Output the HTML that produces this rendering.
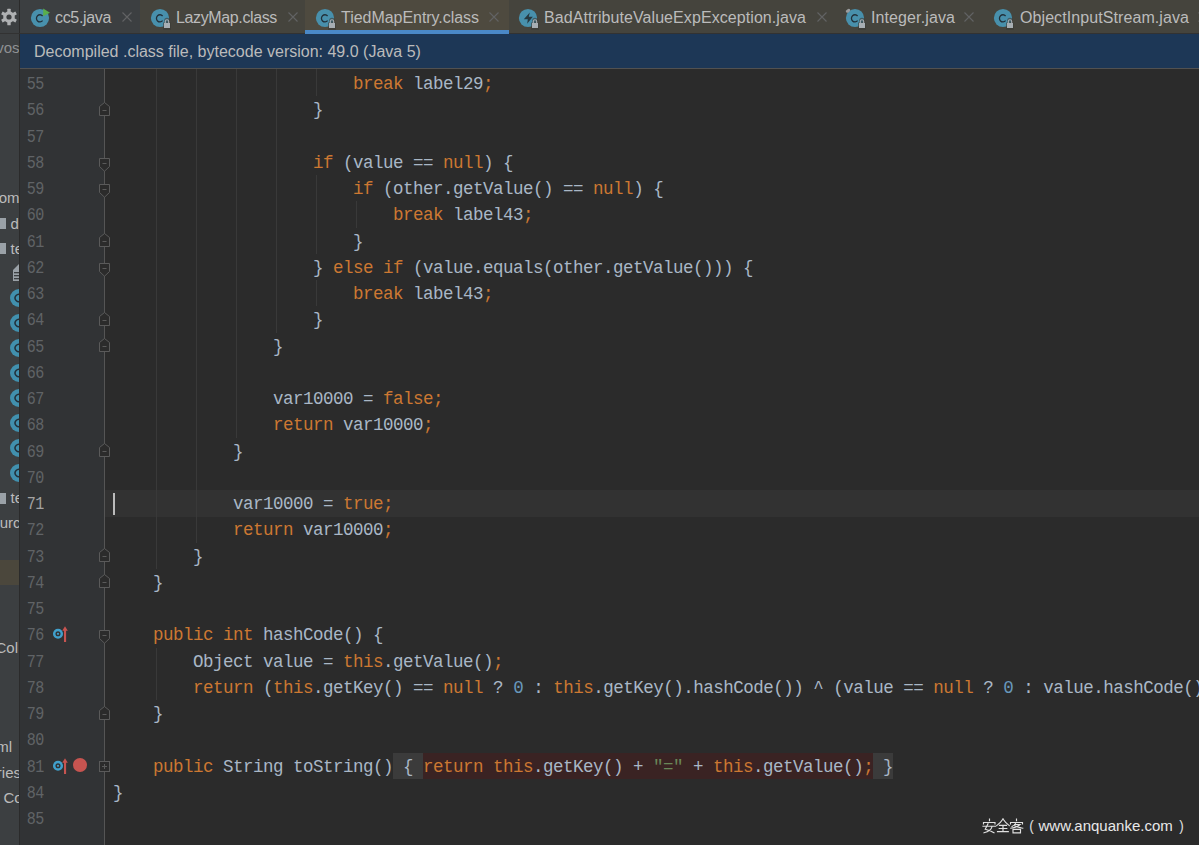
<!DOCTYPE html>
<html><head><meta charset="utf-8">
<style>
*{margin:0;padding:0;box-sizing:border-box}
html,body{width:1199px;height:845px;overflow:hidden;background:#2B2B2B}
body{position:relative;font-family:"Liberation Sans",sans-serif}
.a{position:absolute}
.code{position:absolute;left:113px;font-family:"Liberation Mono",monospace;font-size:17.5px;letter-spacing:-0.5px;white-space:pre;padding-top:1px;height:26.25px;line-height:26.25px;color:#A9B7C6}
.ln{position:absolute;left:13.5px;width:30px;text-align:right;transform:scaleX(0.86);transform-origin:29px 0;font-family:"Liberation Mono",monospace;font-size:17.5px;letter-spacing:-0.5px;padding-top:1px;height:26.25px;line-height:26.25px;color:#606366}
.g{position:absolute;width:1px;background:#393939}
.tab{position:absolute;top:0;height:33px}
.tt{position:absolute;top:8px;font-size:16px;color:#BBBBBB;white-space:nowrap;line-height:20px}
</style></head><body>

<div class="a" style="left:0;top:0;width:19px;height:845px;background:#3C3F41"></div>
<div class="a" style="left:19px;top:0;width:1px;height:845px;background:#2B2B2B"></div>
<div class="a" style="left:20px;top:0;width:1179px;height:33px;background:#45443D"></div>
<div class="a" style="left:20px;top:0;width:120px;height:33px;background:#3C3F41"></div>
<div class="a" style="left:305px;top:0;width:204px;height:33px;background:#4E4A3F"></div>
<div class="a" style="left:0;top:33px;width:1199px;height:1px;background:#323232"></div>
<div class="a" style="left:305px;top:30px;width:204px;height:4px;background:#4A88C7"></div>
<div class="a" style="left:20px;top:34px;width:1179px;height:34px;background:#1D3756"></div>
<div class="a" style="left:20px;top:68px;width:1179px;height:1px;background:#515151"></div>
<div class="a" style="left:34px;top:42px;font-size:16px;line-height:20px;color:#BBBBBB;white-space:nowrap">Decompiled .class file, bytecode version: 49.0 (Java 5)</div>
<div class="a" style="left:20px;top:69px;width:84px;height:776px;background:#313335"></div>
<div class="a" style="left:104px;top:69px;width:1px;height:776px;background:#555555"></div>
<div class="a" style="left:105px;top:490.00px;width:1094px;height:27px;background:#323232"></div>
<div class="a" style="left:113px;top:492.50px;width:2px;height:22px;background:#BBBBBB"></div>
<div class="g" style="left:156px;top:69.00px;height:499.75px"></div>
<div class="g" style="left:196px;top:69.00px;height:473.50px"></div>
<div class="g" style="left:236px;top:69.00px;height:368.50px"></div>
<div class="g" style="left:276px;top:69.00px;height:263.50px"></div>
<div class="g" style="left:316px;top:69.00px;height:27.25px"></div>
<div class="g" style="left:316px;top:175.00px;height:78.75px"></div>
<div class="g" style="left:316px;top:280.00px;height:26.25px"></div>
<div class="g" style="left:356px;top:201.25px;height:26.25px"></div>
<div class="g" style="left:156px;top:647.50px;height:52.50px"></div>
<div class="a" style="left:393px;top:752.50px;width:30px;height:26.25px;background:#3B3B3B"></div>
<div class="a" style="left:423px;top:752.50px;width:450px;height:26.25px;background:#3A2323"></div>
<div class="a" style="left:873px;top:752.50px;width:20px;height:26.25px;background:#3B3B3B"></div>
<div class="ln" style="top:70.00px;color:#606366">55</div>
<div class="code" style="top:70.00px">                        <span style="color:#CC7832">break</span> label29<span style="color:#CC7832">;</span></div>
<div class="ln" style="top:96.25px;color:#606366">56</div>
<div class="code" style="top:96.25px">                    }</div>
<div class="ln" style="top:122.50px;color:#606366">57</div>
<div class="ln" style="top:148.75px;color:#606366">58</div>
<div class="code" style="top:148.75px">                    <span style="color:#CC7832">if</span> (value == <span style="color:#CC7832">null</span>) {</div>
<div class="ln" style="top:175.00px;color:#606366">59</div>
<div class="code" style="top:175.00px">                        <span style="color:#CC7832">if</span> (other.getValue() == <span style="color:#CC7832">null</span>) {</div>
<div class="ln" style="top:201.25px;color:#606366">60</div>
<div class="code" style="top:201.25px">                            <span style="color:#CC7832">break</span> label43<span style="color:#CC7832">;</span></div>
<div class="ln" style="top:227.50px;color:#606366">61</div>
<div class="code" style="top:227.50px">                        }</div>
<div class="ln" style="top:253.75px;color:#606366">62</div>
<div class="code" style="top:253.75px">                    } <span style="color:#CC7832">else if</span> (value.equals(other.getValue())) {</div>
<div class="ln" style="top:280.00px;color:#606366">63</div>
<div class="code" style="top:280.00px">                        <span style="color:#CC7832">break</span> label43<span style="color:#CC7832">;</span></div>
<div class="ln" style="top:306.25px;color:#606366">64</div>
<div class="code" style="top:306.25px">                    }</div>
<div class="ln" style="top:332.50px;color:#606366">65</div>
<div class="code" style="top:332.50px">                }</div>
<div class="ln" style="top:358.75px;color:#606366">66</div>
<div class="ln" style="top:385.00px;color:#606366">67</div>
<div class="code" style="top:385.00px">                var10000 = <span style="color:#CC7832">false;</span></div>
<div class="ln" style="top:411.25px;color:#606366">68</div>
<div class="code" style="top:411.25px">                <span style="color:#CC7832">return</span> var10000<span style="color:#CC7832">;</span></div>
<div class="ln" style="top:437.50px;color:#606366">69</div>
<div class="code" style="top:437.50px">            }</div>
<div class="ln" style="top:463.75px;color:#606366">70</div>
<div class="ln" style="top:490.00px;color:#A4A3A3">71</div>
<div class="code" style="top:490.00px">            var10000 = <span style="color:#CC7832">true;</span></div>
<div class="ln" style="top:516.25px;color:#606366">72</div>
<div class="code" style="top:516.25px">            <span style="color:#CC7832">return</span> var10000<span style="color:#CC7832">;</span></div>
<div class="ln" style="top:542.50px;color:#606366">73</div>
<div class="code" style="top:542.50px">        }</div>
<div class="ln" style="top:568.75px;color:#606366">74</div>
<div class="code" style="top:568.75px">    }</div>
<div class="ln" style="top:595.00px;color:#606366">75</div>
<div class="ln" style="top:621.25px;color:#606366">76</div>
<div class="code" style="top:621.25px">    <span style="color:#CC7832">public int</span> hashCode() {</div>
<div class="ln" style="top:647.50px;color:#606366">77</div>
<div class="code" style="top:647.50px">        Object value = <span style="color:#CC7832">this</span>.getValue()<span style="color:#CC7832">;</span></div>
<div class="ln" style="top:673.75px;color:#606366">78</div>
<div class="code" style="top:673.75px">        <span style="color:#CC7832">return</span> (<span style="color:#CC7832">this</span>.getKey() == <span style="color:#CC7832">null</span> ? <span style="color:#6897BB">0</span> : <span style="color:#CC7832">this</span>.getKey().hashCode()) ^ (value == <span style="color:#CC7832">null</span> ? <span style="color:#6897BB">0</span> : value.hashCode());</div>
<div class="ln" style="top:700.00px;color:#606366">79</div>
<div class="code" style="top:700.00px">    }</div>
<div class="ln" style="top:726.25px;color:#606366">80</div>
<div class="ln" style="top:752.50px;color:#606366">81</div>
<div class="code" style="top:752.50px">    <span style="color:#CC7832">public</span> String toString()</div>
<div class="ln" style="top:778.75px;color:#606366">84</div>
<div class="code" style="top:778.75px">}</div>
<div class="ln" style="top:805.00px;color:#606366">85</div>
<div class="code" style="top:752.50px;left:393px;color:#A9B7C6"> { </div>
<div class="code" style="top:752.50px;left:423px"><span style="color:#CC7832">return </span><span style="color:#CC7832">this</span><span style="color:#A9B7C6">.getKey() + </span><span style="color:#6A8759">"="</span><span style="color:#A9B7C6"> + </span><span style="color:#CC7832">this</span><span style="color:#A9B7C6">.getValue()</span><span style="color:#CC7832">;</span></div>
<div class="code" style="top:752.50px;left:873px;color:#A9B7C6"> }</div>
<div class="a" style="left:0;top:0;width:19px;height:845px;overflow:hidden">
<svg class="a" style="left:0;top:8px" width="18" height="18" viewBox="0 0 18 18"><g fill="#AFB1B3"><rect x="7.3" y="0.8" width="3.4" height="4" rx="0.5" transform="rotate(0 9 9)"/><rect x="7.3" y="0.8" width="3.4" height="4" rx="0.5" transform="rotate(60 9 9)"/><rect x="7.3" y="0.8" width="3.4" height="4" rx="0.5" transform="rotate(120 9 9)"/><rect x="7.3" y="0.8" width="3.4" height="4" rx="0.5" transform="rotate(180 9 9)"/><rect x="7.3" y="0.8" width="3.4" height="4" rx="0.5" transform="rotate(240 9 9)"/><rect x="7.3" y="0.8" width="3.4" height="4" rx="0.5" transform="rotate(300 9 9)"/><circle cx="9" cy="9" r="5.8"/></g><circle cx="9" cy="9" r="2.6" fill="#3C3F41"/></svg>
</div>
<div class="a" style="left:0;top:37.8px;width:19px;height:22px;overflow:hidden"><div class="a" style="right:-0.5px;top:0;font-size:15px;line-height:20px;color:#8F9193;white-space:nowrap">vos</div></div>
<div class="a" style="left:0;top:187.8px;width:19px;height:22px;overflow:hidden"><div class="a" style="right:-0.5px;top:0;font-size:15px;line-height:20px;color:#BBBBBB;white-space:nowrap">om</div></div>
<div class="a" style="left:0;top:218px;width:6px;height:11px;background:#9AA1A7"></div>
<div class="a" style="left:0;top:213.8px;width:19px;height:22px;overflow:hidden"><div class="a" style="left:10.5px;top:0;font-size:15px;line-height:20px;color:#BBBBBB;white-space:nowrap">d</div></div>
<div class="a" style="left:0;top:243px;width:6px;height:11px;background:#9AA1A7"></div>
<div class="a" style="left:0;top:238.8px;width:19px;height:22px;overflow:hidden"><div class="a" style="left:10.5px;top:0;font-size:15px;line-height:20px;color:#BBBBBB;white-space:nowrap">te</div></div>
<svg class="a" style="left:13px;top:264px" width="6" height="17" viewBox="0 0 6 17"><path d="M0 6 L6 0 L6 17 L0 17 Z" fill="#9AA1A7"/><rect x="1" y="8" width="5" height="1.3" fill="#3C3F41"/><rect x="1" y="11" width="5" height="1.3" fill="#3C3F41"/><rect x="1" y="14" width="5" height="1.3" fill="#3C3F41"/></svg>
<svg class="a" style="left:0;top:287.8px" width="19" height="20" viewBox="0 0 19 20"><circle cx="19" cy="10" r="9" fill="#4190AE"/><path d="M21 7.2 A3.6 3.6 0 1 0 21 12.8" fill="none" stroke="#22303A" stroke-width="1.5"/></svg>
<svg class="a" style="left:0;top:312.8px" width="19" height="20" viewBox="0 0 19 20"><circle cx="19" cy="10" r="9" fill="#4190AE"/><path d="M21 7.2 A3.6 3.6 0 1 0 21 12.8" fill="none" stroke="#22303A" stroke-width="1.5"/></svg>
<svg class="a" style="left:0;top:337.8px" width="19" height="20" viewBox="0 0 19 20"><circle cx="19" cy="10" r="9" fill="#4190AE"/><path d="M21 7.2 A3.6 3.6 0 1 0 21 12.8" fill="none" stroke="#22303A" stroke-width="1.5"/></svg>
<svg class="a" style="left:0;top:362.8px" width="19" height="20" viewBox="0 0 19 20"><circle cx="19" cy="10" r="9" fill="#4190AE"/><path d="M21 7.2 A3.6 3.6 0 1 0 21 12.8" fill="none" stroke="#22303A" stroke-width="1.5"/></svg>
<svg class="a" style="left:0;top:387.8px" width="19" height="20" viewBox="0 0 19 20"><circle cx="19" cy="10" r="9" fill="#4190AE"/><path d="M21 7.2 A3.6 3.6 0 1 0 21 12.8" fill="none" stroke="#22303A" stroke-width="1.5"/></svg>
<svg class="a" style="left:0;top:412.8px" width="19" height="20" viewBox="0 0 19 20"><circle cx="19" cy="10" r="9" fill="#4190AE"/><path d="M21 7.2 A3.6 3.6 0 1 0 21 12.8" fill="none" stroke="#22303A" stroke-width="1.5"/></svg>
<svg class="a" style="left:0;top:437.8px" width="19" height="20" viewBox="0 0 19 20"><circle cx="19" cy="10" r="9" fill="#4190AE"/><path d="M21 7.2 A3.6 3.6 0 1 0 21 12.8" fill="none" stroke="#22303A" stroke-width="1.5"/></svg>
<svg class="a" style="left:0;top:462.8px" width="19" height="20" viewBox="0 0 19 20"><circle cx="19" cy="10" r="9" fill="#4190AE"/><path d="M21 7.2 A3.6 3.6 0 1 0 21 12.8" fill="none" stroke="#22303A" stroke-width="1.5"/></svg>
<div class="a" style="left:0;top:493px;width:6px;height:11px;background:#9AA1A7"></div>
<div class="a" style="left:0;top:487.8px;width:19px;height:22px;overflow:hidden"><div class="a" style="left:10.5px;top:0;font-size:15px;line-height:20px;color:#BBBBBB;white-space:nowrap">te</div></div>
<div class="a" style="left:0;top:512.8px;width:19px;height:22px;overflow:hidden"><div class="a" style="right:-1.5px;top:0;font-size:15px;line-height:20px;color:#BBBBBB;white-space:nowrap">urc</div></div>
<div class="a" style="left:0;top:560px;width:19px;height:25px;background:#4B473C"></div>
<div class="a" style="left:0;top:637.8px;width:19px;height:22px;overflow:hidden"><div class="a" style="right:1.0px;top:0;font-size:15px;line-height:20px;color:#BBBBBB;white-space:nowrap">Col</div></div>
<div class="a" style="left:0;top:737.3px;width:19px;height:22px;overflow:hidden"><div class="a" style="right:7.0px;top:0;font-size:15px;line-height:20px;color:#BBBBBB;white-space:nowrap">ml</div></div>
<div class="a" style="left:0;top:762.8px;width:19px;height:22px;overflow:hidden"><div class="a" style="right:-2.0px;top:0;font-size:15px;line-height:20px;color:#BBBBBB;white-space:nowrap">ries</div></div>
<div class="a" style="left:0;top:787.8px;width:19px;height:22px;overflow:hidden"><div class="a" style="left:3.5px;top:0;font-size:15px;line-height:20px;color:#BBBBBB;white-space:nowrap">Co</div></div>
<svg class="a" style="left:30.0px;top:7.9px" width="22" height="22" viewBox="0 0 22 22"><circle cx="10" cy="10" r="9.1" fill="#4890AC"/><path d="M12.6 8.0 A3.5 3.6 0 1 0 12.6 12.7" fill="none" stroke="#22303A" stroke-width="1.3"/><path d="M13.2 0.6 L20 4.7 L13.2 8.2 Z" fill="#5AAE4B"/></svg>
<div class="tt" style="left:55.0px;letter-spacing:-0.337px">cc5.java</div>
<svg class="a" style="left:122.0px;top:12.0px" width="10" height="10" viewBox="0 0 10 10"><path d="M0.5 0.5 L9.5 9.5 M9.5 0.5 L0.5 9.5" stroke="#626364" stroke-width="1.1"/></svg>
<svg class="a" style="left:150.0px;top:7.9px" width="22" height="22" viewBox="0 0 22 22"><circle cx="10" cy="10" r="9.1" fill="#4890AC"/><path d="M12.6 8.0 A3.5 3.6 0 1 0 12.6 12.7" fill="none" stroke="#22303A" stroke-width="1.3"/><path d="M13 22 L13 14.5 L14.2 14.5 L14.2 12.5 A2.8 2.8 0 0 1 19.8 12.5 L19.8 14.5 L21 14.5 L21 22 Z" fill="#3A3A36" opacity="0.6"/><path d="M15.3 15.2 L15.3 13.4 A1.7 1.7 0 0 1 18.7 13.4 L18.7 15.2" fill="none" stroke="#A7AEB3" stroke-width="1.1"/><rect x="14" y="15" width="6" height="5" fill="#A7AEB3"/></svg>
<div class="tt" style="left:176.0px;letter-spacing:-0.371px">LazyMap.class</div>
<svg class="a" style="left:287.5px;top:12.0px" width="10" height="10" viewBox="0 0 10 10"><path d="M0.5 0.5 L9.5 9.5 M9.5 0.5 L0.5 9.5" stroke="#626364" stroke-width="1.1"/></svg>
<svg class="a" style="left:315.0px;top:7.9px" width="22" height="22" viewBox="0 0 22 22"><circle cx="10" cy="10" r="9.1" fill="#4890AC"/><path d="M12.6 8.0 A3.5 3.6 0 1 0 12.6 12.7" fill="none" stroke="#22303A" stroke-width="1.3"/><path d="M13 22 L13 14.5 L14.2 14.5 L14.2 12.5 A2.8 2.8 0 0 1 19.8 12.5 L19.8 14.5 L21 14.5 L21 22 Z" fill="#3A3A36" opacity="0.6"/><path d="M15.3 15.2 L15.3 13.4 A1.7 1.7 0 0 1 18.7 13.4 L18.7 15.2" fill="none" stroke="#A7AEB3" stroke-width="1.1"/><rect x="14" y="15" width="6" height="5" fill="#A7AEB3"/></svg>
<div class="tt" style="left:341.0px;letter-spacing:-0.039px">TiedMapEntry.class</div>
<svg class="a" style="left:489.0px;top:12.0px" width="10" height="10" viewBox="0 0 10 10"><path d="M0.5 0.5 L9.5 9.5 M9.5 0.5 L0.5 9.5" stroke="#626364" stroke-width="1.1"/></svg>
<svg class="a" style="left:517.5px;top:7.9px" width="22" height="22" viewBox="0 0 22 22"><circle cx="10" cy="10" r="9.1" fill="#4890AC"/><path d="M11.8 4.4 L5.8 11.2 L9.8 11.2 L9.2 15.8 L14.8 8.8 L10.8 8.8 Z" fill="#263840"/><path d="M13 22 L13 14.5 L14.2 14.5 L14.2 12.5 A2.8 2.8 0 0 1 19.8 12.5 L19.8 14.5 L21 14.5 L21 22 Z" fill="#3A3A36" opacity="0.6"/><path d="M15.3 15.2 L15.3 13.4 A1.7 1.7 0 0 1 18.7 13.4 L18.7 15.2" fill="none" stroke="#A7AEB3" stroke-width="1.1"/><rect x="14" y="15" width="6" height="5" fill="#A7AEB3"/></svg>
<div class="tt" style="left:544.0px;letter-spacing:0.076px">BadAttributeValueExpException.java</div>
<svg class="a" style="left:817.0px;top:12.0px" width="10" height="10" viewBox="0 0 10 10"><path d="M0.5 0.5 L9.5 9.5 M9.5 0.5 L0.5 9.5" stroke="#626364" stroke-width="1.1"/></svg>
<svg class="a" style="left:844.5px;top:7.9px" width="22" height="22" viewBox="0 0 22 22"><circle cx="10" cy="10" r="9.1" fill="#4890AC"/><path d="M12.6 8.0 A3.5 3.6 0 1 0 12.6 12.7" fill="none" stroke="#22303A" stroke-width="1.3"/><ellipse cx="3" cy="2.8" rx="2.4" ry="1.6" transform="rotate(-30 3 2.8)" fill="#9A9C9E"/><path d="M13 22 L13 14.5 L14.2 14.5 L14.2 12.5 A2.8 2.8 0 0 1 19.8 12.5 L19.8 14.5 L21 14.5 L21 22 Z" fill="#3A3A36" opacity="0.6"/><path d="M15.3 15.2 L15.3 13.4 A1.7 1.7 0 0 1 18.7 13.4 L18.7 15.2" fill="none" stroke="#A7AEB3" stroke-width="1.1"/><rect x="14" y="15" width="6" height="5" fill="#A7AEB3"/></svg>
<div class="tt" style="left:871.0px;letter-spacing:0.106px">Integer.java</div>
<svg class="a" style="left:964.0px;top:12.0px" width="10" height="10" viewBox="0 0 10 10"><path d="M0.5 0.5 L9.5 9.5 M9.5 0.5 L0.5 9.5" stroke="#626364" stroke-width="1.1"/></svg>
<svg class="a" style="left:993.0px;top:7.9px" width="22" height="22" viewBox="0 0 22 22"><circle cx="10" cy="10" r="9.1" fill="#4890AC"/><path d="M12.6 8.0 A3.5 3.6 0 1 0 12.6 12.7" fill="none" stroke="#22303A" stroke-width="1.3"/><path d="M13 22 L13 14.5 L14.2 14.5 L14.2 12.5 A2.8 2.8 0 0 1 19.8 12.5 L19.8 14.5 L21 14.5 L21 22 Z" fill="#3A3A36" opacity="0.6"/><path d="M15.3 15.2 L15.3 13.4 A1.7 1.7 0 0 1 18.7 13.4 L18.7 15.2" fill="none" stroke="#A7AEB3" stroke-width="1.1"/><rect x="14" y="15" width="6" height="5" fill="#A7AEB3"/></svg>
<div class="tt" style="left:1020.0px;letter-spacing:0.082px">ObjectInputStream.java</div>
<svg class="a" style="left:1197.5px;top:12.0px" width="10" height="10" viewBox="0 0 10 10"><path d="M0.5 0.5 L9.5 9.5 M9.5 0.5 L0.5 9.5" stroke="#626364" stroke-width="1.1"/></svg>
<svg class="a" style="left:51px;top:624.4px" width="20" height="20" viewBox="0 0 20 20"><circle cx="7" cy="9.8" r="3.8" fill="none" stroke="#40A0CC" stroke-width="2.5"/><circle cx="7" cy="9.8" r="1.1" fill="#40A0CC"/><rect x="13" y="5" width="2.1" height="13" fill="#C75450"/><path d="M11.2 6.8 L14 2.2 L16.8 6.8 Z" fill="#C75450"/></svg>
<svg class="a" style="left:51px;top:755.6px" width="20" height="20" viewBox="0 0 20 20"><circle cx="7" cy="9.8" r="3.8" fill="none" stroke="#40A0CC" stroke-width="2.5"/><circle cx="7" cy="9.8" r="1.1" fill="#40A0CC"/><rect x="13" y="5" width="2.1" height="13" fill="#C75450"/><path d="M11.2 6.8 L14 2.2 L16.8 6.8 Z" fill="#C75450"/></svg>
<div class="a" style="left:72.6px;top:758.3px;width:14px;height:14px;border-radius:50%;background:#C75450"></div>
<svg class="a" style="left:98px;top:157.9px" width="13" height="16" viewBox="0 0 13 16"><path d="M1.5 0.5 L11.5 0.5 L11.5 8.5 L6.5 13.2 L1.5 8.5 Z" fill="#2B2B2B" stroke="#5A5A5A" stroke-width="1"/><path d="M4.5 5.5 L8.5 5.5" stroke="#5A5A5A" stroke-width="1"/></svg>
<svg class="a" style="left:98px;top:184.1px" width="13" height="16" viewBox="0 0 13 16"><path d="M1.5 0.5 L11.5 0.5 L11.5 8.5 L6.5 13.2 L1.5 8.5 Z" fill="#2B2B2B" stroke="#5A5A5A" stroke-width="1"/><path d="M4.5 5.5 L8.5 5.5" stroke="#5A5A5A" stroke-width="1"/></svg>
<svg class="a" style="left:98px;top:262.9px" width="13" height="16" viewBox="0 0 13 16"><path d="M1.5 0.5 L11.5 0.5 L11.5 8.5 L6.5 13.2 L1.5 8.5 Z" fill="#2B2B2B" stroke="#5A5A5A" stroke-width="1"/><path d="M4.5 5.5 L8.5 5.5" stroke="#5A5A5A" stroke-width="1"/></svg>
<svg class="a" style="left:98px;top:630.4px" width="13" height="16" viewBox="0 0 13 16"><path d="M1.5 0.5 L11.5 0.5 L11.5 8.5 L6.5 13.2 L1.5 8.5 Z" fill="#2B2B2B" stroke="#5A5A5A" stroke-width="1"/><path d="M4.5 5.5 L8.5 5.5" stroke="#5A5A5A" stroke-width="1"/></svg>
<svg class="a" style="left:98px;top:101.9px" width="13" height="16" viewBox="0 0 13 16"><path d="M1.5 13.5 L11.5 13.5 L11.5 4.5 L6.5 0.5 L1.5 4.5 Z" fill="#2B2B2B" stroke="#5A5A5A" stroke-width="1"/><path d="M4.5 8.5 L8.5 8.5" stroke="#5A5A5A" stroke-width="1"/></svg>
<svg class="a" style="left:98px;top:233.1px" width="13" height="16" viewBox="0 0 13 16"><path d="M1.5 13.5 L11.5 13.5 L11.5 4.5 L6.5 0.5 L1.5 4.5 Z" fill="#2B2B2B" stroke="#5A5A5A" stroke-width="1"/><path d="M4.5 8.5 L8.5 8.5" stroke="#5A5A5A" stroke-width="1"/></svg>
<svg class="a" style="left:98px;top:311.9px" width="13" height="16" viewBox="0 0 13 16"><path d="M1.5 13.5 L11.5 13.5 L11.5 4.5 L6.5 0.5 L1.5 4.5 Z" fill="#2B2B2B" stroke="#5A5A5A" stroke-width="1"/><path d="M4.5 8.5 L8.5 8.5" stroke="#5A5A5A" stroke-width="1"/></svg>
<svg class="a" style="left:98px;top:338.1px" width="13" height="16" viewBox="0 0 13 16"><path d="M1.5 13.5 L11.5 13.5 L11.5 4.5 L6.5 0.5 L1.5 4.5 Z" fill="#2B2B2B" stroke="#5A5A5A" stroke-width="1"/><path d="M4.5 8.5 L8.5 8.5" stroke="#5A5A5A" stroke-width="1"/></svg>
<svg class="a" style="left:98px;top:443.1px" width="13" height="16" viewBox="0 0 13 16"><path d="M1.5 13.5 L11.5 13.5 L11.5 4.5 L6.5 0.5 L1.5 4.5 Z" fill="#2B2B2B" stroke="#5A5A5A" stroke-width="1"/><path d="M4.5 8.5 L8.5 8.5" stroke="#5A5A5A" stroke-width="1"/></svg>
<svg class="a" style="left:98px;top:548.1px" width="13" height="16" viewBox="0 0 13 16"><path d="M1.5 13.5 L11.5 13.5 L11.5 4.5 L6.5 0.5 L1.5 4.5 Z" fill="#2B2B2B" stroke="#5A5A5A" stroke-width="1"/><path d="M4.5 8.5 L8.5 8.5" stroke="#5A5A5A" stroke-width="1"/></svg>
<svg class="a" style="left:98px;top:574.4px" width="13" height="16" viewBox="0 0 13 16"><path d="M1.5 13.5 L11.5 13.5 L11.5 4.5 L6.5 0.5 L1.5 4.5 Z" fill="#2B2B2B" stroke="#5A5A5A" stroke-width="1"/><path d="M4.5 8.5 L8.5 8.5" stroke="#5A5A5A" stroke-width="1"/></svg>
<svg class="a" style="left:98px;top:705.6px" width="13" height="16" viewBox="0 0 13 16"><path d="M1.5 13.5 L11.5 13.5 L11.5 4.5 L6.5 0.5 L1.5 4.5 Z" fill="#2B2B2B" stroke="#5A5A5A" stroke-width="1"/><path d="M4.5 8.5 L8.5 8.5" stroke="#5A5A5A" stroke-width="1"/></svg>
<svg class="a" style="left:98px;top:760.6px" width="13" height="13" viewBox="0 0 13 13"><rect x="1.5" y="0.5" width="10" height="10" fill="#2B2B2B" stroke="#5A5A5A" stroke-width="1"/><path d="M4 5.5 L9 5.5 M6.5 3 L6.5 8" stroke="#5A5A5A" stroke-width="1"/></svg>
<div class="a" style="left:1038.5px;top:815.8px;font-size:15px;line-height:20px;color:#E8E8E8;white-space:nowrap">www.anquanke.com</div>
<svg class="a" style="left:982px;top:818px" width="54" height="17" viewBox="0 0 54 17"><g fill="none" stroke="#E0E0E0" stroke-width="1.15" stroke-linecap="square"><path d="M7.5 1 L7.5 2.6 M1.5 6 L1.5 4.5 L13 4.5 L13 6 M1 8.2 L13.5 8.2 M6 5.8 Q4.5 9 3.2 11.2 Q8.5 12.5 12 14.8 M10 8.6 Q9 13 2 14.8"/><path d="M21 1 Q18.5 5 14.7 7.6 M21 1 Q23.5 5 27.3 7.6 M17.5 7.4 L24.5 7.4 M17.2 10.5 L24.8 10.5 M15.5 13.6 L26.3 13.6 M21 7.4 L21 13.6"/><path d="M34.5 1 L34.5 2.6 M28.5 6 L28.5 4.5 L40.5 4.5 L40.5 6 M33.5 5.5 Q32 7.5 30 8.5 M32.5 6.5 L38 6.5 Q35 9.5 28.8 10.2 M32.8 7.8 Q36 9.5 40.8 10.2 M31 11.3 L38.5 11.3 L38.5 14.8 L31 14.8 Z"/></g></svg>
<div class="a" style="left:1028.5px;top:815.8px;font-size:15px;line-height:20px;color:#E0E0E0;transform:scaleX(0.9)">(</div>
<div class="a" style="left:1178.5px;top:815.8px;font-size:15px;line-height:20px;color:#E0E0E0;transform:scaleX(0.9)">)</div>
</body></html>
